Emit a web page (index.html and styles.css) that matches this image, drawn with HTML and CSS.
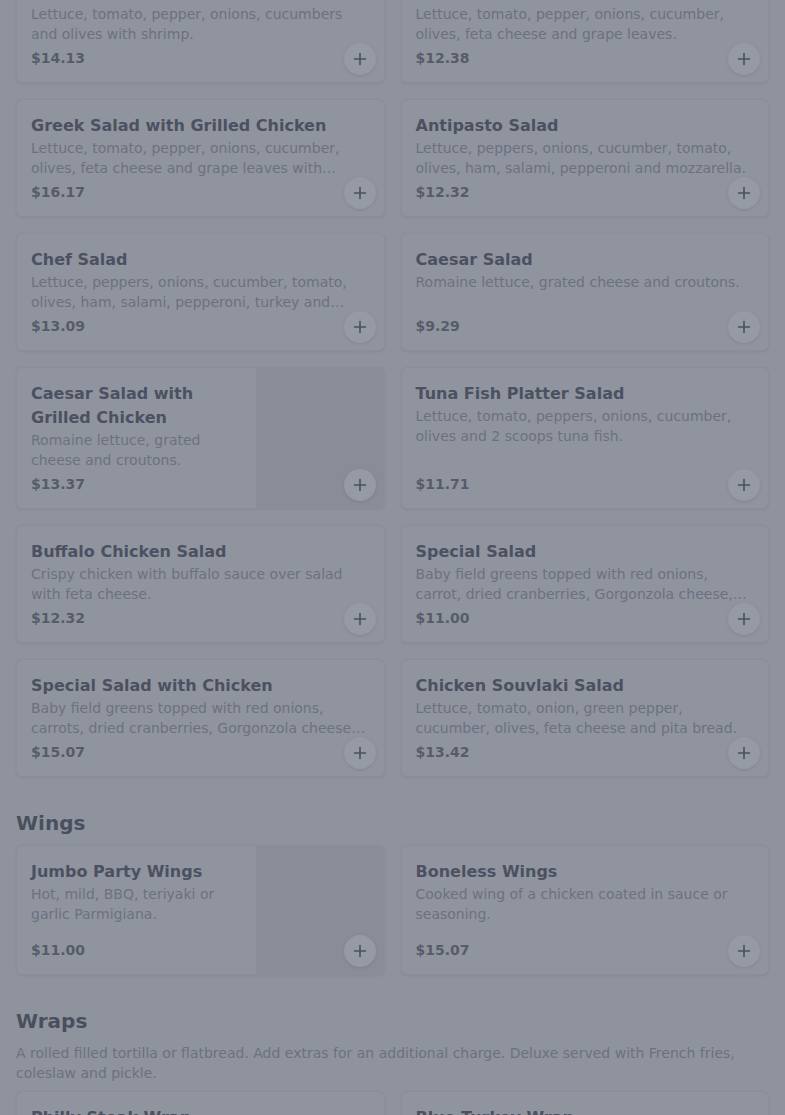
FILE: index.html
```html
<!DOCTYPE html>
<html lang="en">
<head>
<meta charset="utf-8">
<title>Menu</title>
<link rel="stylesheet" href="styles.css">
</head>
<body>
<main class="menu">
  <section class="section section-first">
    <div class="grid">
      <article class="card">
        <div class="body">
          <h3 class="title">Shrimp Salad</h3>
          <p class="desc">Lettuce, tomato, pepper, onions, cucumbers and olives with shrimp.</p>
          <div class="price">$14.13</div>
        </div>
        <button class="add" aria-label="Add"><svg viewBox="0 0 16 16"><path d="M8 2.5v11M2.5 8h11"/></svg></button>
      </article>
      <article class="card">
        <div class="body">
          <h3 class="title">Greek Salad</h3>
          <p class="desc">Lettuce, tomato, pepper, onions, cucumber, olives, feta cheese and grape leaves.</p>
          <div class="price">$12.38</div>
        </div>
        <button class="add" aria-label="Add"><svg viewBox="0 0 16 16"><path d="M8 2.5v11M2.5 8h11"/></svg></button>
      </article>
      <article class="card">
        <div class="body">
          <h3 class="title">Greek Salad with Grilled Chicken</h3>
          <p class="desc">Lettuce, tomato, pepper, onions, cucumber, olives, feta cheese and grape leaves with grilled chicken.</p>
          <div class="price">$16.17</div>
        </div>
        <button class="add" aria-label="Add"><svg viewBox="0 0 16 16"><path d="M8 2.5v11M2.5 8h11"/></svg></button>
      </article>
      <article class="card">
        <div class="body">
          <h3 class="title">Antipasto Salad</h3>
          <p class="desc">Lettuce, peppers, onions, cucumber, tomato, olives, ham, salami, pepperoni and mozzarella.</p>
          <div class="price">$12.32</div>
        </div>
        <button class="add" aria-label="Add"><svg viewBox="0 0 16 16"><path d="M8 2.5v11M2.5 8h11"/></svg></button>
      </article>
      <article class="card">
        <div class="body">
          <h3 class="title">Chef Salad</h3>
          <p class="desc">Lettuce, peppers, onions, cucumber, tomato, olives, ham, salami, pepperoni, turkey and provolone cheese.</p>
          <div class="price">$13.09</div>
        </div>
        <button class="add" aria-label="Add"><svg viewBox="0 0 16 16"><path d="M8 2.5v11M2.5 8h11"/></svg></button>
      </article>
      <article class="card">
        <div class="body">
          <h3 class="title">Caesar Salad</h3>
          <p class="desc">Romaine lettuce, grated cheese and croutons.</p>
          <div class="price">$9.29</div>
        </div>
        <button class="add" aria-label="Add"><svg viewBox="0 0 16 16"><path d="M8 2.5v11M2.5 8h11"/></svg></button>
      </article>
      <article class="card">
        <div class="body">
          <h3 class="title">Caesar Salad with Grilled Chicken</h3>
          <p class="desc">Romaine lettuce, grated cheese and croutons.</p>
          <div class="price">$13.37</div>
        </div>
        <div class="thumb"></div>
        <button class="add" aria-label="Add"><svg viewBox="0 0 16 16"><path d="M8 2.5v11M2.5 8h11"/></svg></button>
      </article>
      <article class="card">
        <div class="body">
          <h3 class="title">Tuna Fish Platter Salad</h3>
          <p class="desc">Lettuce, tomato, peppers, onions, cucumber, olives and 2 scoops tuna fish.</p>
          <div class="price">$11.71</div>
        </div>
        <button class="add" aria-label="Add"><svg viewBox="0 0 16 16"><path d="M8 2.5v11M2.5 8h11"/></svg></button>
      </article>
      <article class="card">
        <div class="body">
          <h3 class="title">Buffalo Chicken Salad</h3>
          <p class="desc">Crispy chicken with buffalo sauce over salad with feta cheese.</p>
          <div class="price">$12.32</div>
        </div>
        <button class="add" aria-label="Add"><svg viewBox="0 0 16 16"><path d="M8 2.5v11M2.5 8h11"/></svg></button>
      </article>
      <article class="card">
        <div class="body">
          <h3 class="title">Special Salad</h3>
          <p class="desc">Baby field greens topped with red onions, carrot, dried cranberries, Gorgonzola cheese, walnuts and raspberry vinaigrette.</p>
          <div class="price">$11.00</div>
        </div>
        <button class="add" aria-label="Add"><svg viewBox="0 0 16 16"><path d="M8 2.5v11M2.5 8h11"/></svg></button>
      </article>
      <article class="card">
        <div class="body">
          <h3 class="title">Special Salad with Chicken</h3>
          <p class="desc">Baby field greens topped with red onions, carrots, dried cranberries, Gorgonzola cheese, walnuts and grilled chicken.</p>
          <div class="price">$15.07</div>
        </div>
        <button class="add" aria-label="Add"><svg viewBox="0 0 16 16"><path d="M8 2.5v11M2.5 8h11"/></svg></button>
      </article>
      <article class="card">
        <div class="body">
          <h3 class="title">Chicken Souvlaki Salad</h3>
          <p class="desc">Lettuce, tomato, onion, green pepper, cucumber, olives, feta cheese and pita bread.</p>
          <div class="price">$13.42</div>
        </div>
        <button class="add" aria-label="Add"><svg viewBox="0 0 16 16"><path d="M8 2.5v11M2.5 8h11"/></svg></button>
      </article>
    </div>
  </section>

  <section class="section">
    <h2 class="heading">Wings</h2>
    <div class="grid">
      <article class="card">
        <div class="body">
          <h3 class="title">Jumbo Party Wings</h3>
          <p class="desc">Hot, mild, BBQ, teriyaki or garlic Parmigiana.</p>
          <div class="price">$11.00</div>
        </div>
        <div class="thumb"></div>
        <button class="add" aria-label="Add"><svg viewBox="0 0 16 16"><path d="M8 2.5v11M2.5 8h11"/></svg></button>
      </article>
      <article class="card">
        <div class="body">
          <h3 class="title">Boneless Wings</h3>
          <p class="desc">Cooked wing of a chicken coated in sauce or seasoning.</p>
          <div class="price">$15.07</div>
        </div>
        <button class="add" aria-label="Add"><svg viewBox="0 0 16 16"><path d="M8 2.5v11M2.5 8h11"/></svg></button>
      </article>
    </div>
  </section>

  <section class="section">
    <h2 class="heading">Wraps</h2>
    <p class="section-desc">A rolled filled tortilla or flatbread. Add extras for an additional charge. Deluxe served with French fries, coleslaw and pickle.</p>
    <div class="grid">
      <article class="card">
        <div class="body">
          <h3 class="title">Philly Steak Wrap</h3>
          <p class="desc">Steak, onions, peppers and American cheese.</p>
          <div class="price">$12.00</div>
        </div>
        <button class="add" aria-label="Add"><svg viewBox="0 0 16 16"><path d="M8 2.5v11M2.5 8h11"/></svg></button>
      </article>
      <article class="card">
        <div class="body">
          <h3 class="title">Blue Turkey Wrap</h3>
          <p class="desc">Turkey, lettuce, tomato and blue cheese.</p>
          <div class="price">$11.50</div>
        </div>
        <button class="add" aria-label="Add"><svg viewBox="0 0 16 16"><path d="M8 2.5v11M2.5 8h11"/></svg></button>
      </article>
    </div>
  </section>
</main>
</body>
</html>
```

FILE: styles.css
```css
* { box-sizing: border-box; }

html, body {
  margin: 0;
  padding: 0;
  background: #8f939e;
  font-family: "DejaVu Sans", Verdana, sans-serif;
  overflow: hidden;
}

.menu {
  padding: 0 16px;
  display: flex;
  flex-direction: column;
  gap: 32px;
  margin-top: -35px;
}

.section {
  display: flex;
  flex-direction: column;
}

.heading {
  margin: 0 0 8px;
  font-size: 20px;
  line-height: 28px;
  font-weight: 700;
  color: #4a4f5e;
}

.section-desc {
  margin: 0 0 8px;
  font-size: 14px;
  line-height: 20px;
  color: #6c717f;
}

.grid {
  display: grid;
  grid-template-columns: 1fr 1fr;
  gap: 16px;
}

.card {
  position: relative;
  display: flex;
  background: #90949f;
  border: 1px solid #8a8e99;
  border-radius: 6px;
  overflow: hidden;
  box-shadow: 0 1px 2px rgba(60, 64, 75, 0.1);
}

.body {
  flex: 1;
  min-width: 0;
  display: flex;
  flex-direction: column;
  padding: 14px 14px 10px;
}

.title {
  margin: 0;
  font-size: 16px;
  line-height: 24px;
  font-weight: 700;
  color: #4c5161;
}

.desc {
  margin: 0;
  font-size: 14px;
  line-height: 20px;
  color: #6c717f;
  display: -webkit-box;
  -webkit-line-clamp: 2;
  -webkit-box-orient: vertical;
  overflow: hidden;
}

.price {
  margin-top: auto;
  font-size: 14px;
  line-height: 28px;
  font-weight: 700;
  color: #575c6a;
}

.thumb {
  flex: none;
  width: 128px;
  min-height: 128px;
  background: #898d98;
}

.add {
  position: absolute;
  right: 8px;
  bottom: 7px;
  width: 32px;
  height: 32px;
  padding: 0;
  border: none;
  border-radius: 50%;
  background: #959aa4;
  box-shadow: 0 1px 3px rgba(60, 64, 75, 0.18);
  display: flex;
  align-items: center;
  justify-content: center;
}

.add svg {
  width: 16px;
  height: 16px;
  fill: none;
  stroke: #4c5161;
  stroke-width: 1.6;
  stroke-linecap: round;
}
```
